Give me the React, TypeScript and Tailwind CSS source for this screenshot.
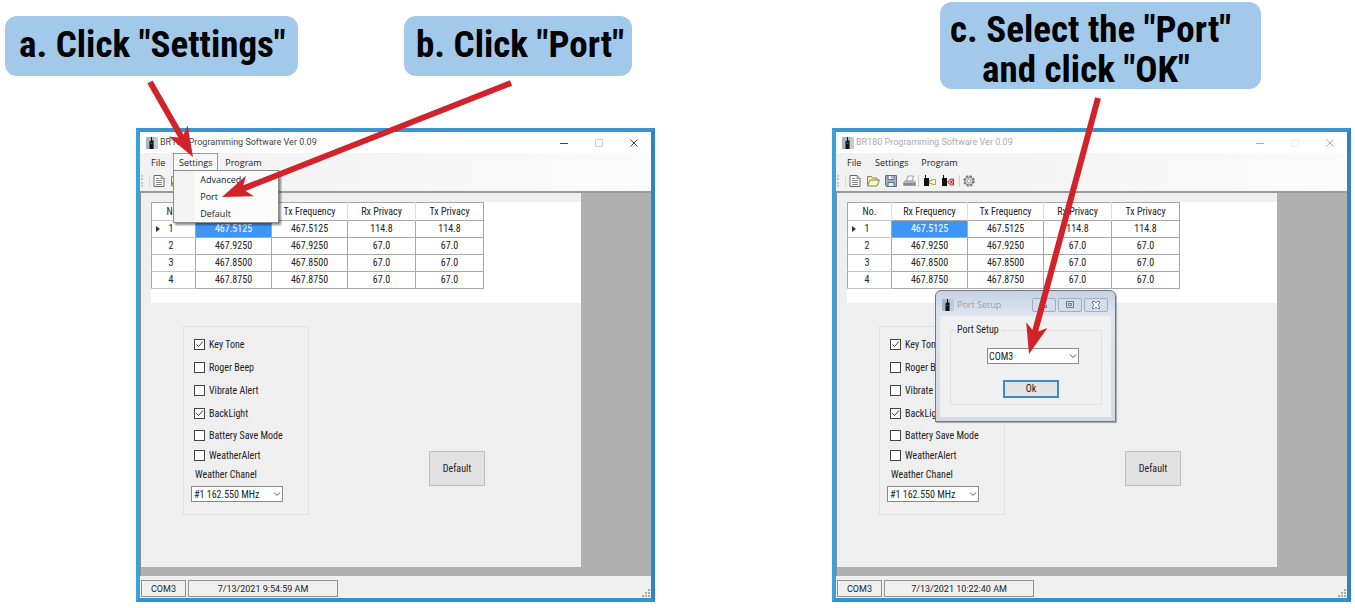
import React from 'react';
import { clsx } from 'clsx';

const GRID_FONT = "font-['Roboto_Condensed','Liberation_Sans_Narrow',Arial,sans-serif]";
const MENU_FONT = "font-['Open_Sans','Noto_Sans',sans-serif]";
const TITLE_FONT = 'font-[Roboto,sans-serif]';

const channels = [
  { no: 1, rx: '467.5125', tx: '467.5125', rxPrivacy: '114.8', txPrivacy: '114.8' },
  { no: 2, rx: '467.9250', tx: '467.9250', rxPrivacy: '67.0', txPrivacy: '67.0' },
  { no: 3, rx: '467.8500', tx: '467.8500', rxPrivacy: '67.0', txPrivacy: '67.0' },
  { no: 4, rx: '467.8750', tx: '467.8750', rxPrivacy: '67.0', txPrivacy: '67.0' },
];

const options = [
  { label: 'Key Tone', checked: true, row: 'h-[23px]' },
  { label: 'Roger Beep', checked: false, row: 'h-[23px]' },
  { label: 'Vibrate Alert', checked: false, row: 'h-[23px]' },
  { label: 'BackLight', checked: true, row: 'h-[23px]' },
  { label: 'Battery Save Mode', checked: false, row: 'h-5' },
  { label: 'WeatherAlert', checked: false, row: 'h-5' },
];

interface ArrowProps {
  from: [number, number];
  to: [number, number];
}

const Arrow: React.FC<ArrowProps> = ({ from, to }) => {
  const length = Math.hypot(to[0] - from[0], to[1] - from[1]);
  const ux = (to[0] - from[0]) / length;
  const uy = (to[1] - from[1]) / length;
  // point "back" px behind the tip and "side" px off the axis
  const at = (back: number, side: number) =>
    `${to[0] - ux * back - uy * side},${to[1] - uy * back + ux * side}`;

  return (
    <g fill="#d2232a">
      <polygon points={[at(length, -3), at(length, 3), at(18, 3), at(18, -3)].join(' ')} />
      <polygon points={[at(0, 0), at(30, 11), at(22, 0), at(30, -11)].join(' ')} />
    </g>
  );
};

const Arrows: React.FC<{ children: React.ReactNode }> = ({ children }) => (
  <svg className="absolute inset-0 z-30 h-full w-full overflow-visible pointer-events-none" aria-hidden="true">
    {children}
  </svg>
);

const StepLabel: React.FC<{ className?: string; children: React.ReactNode }> = ({ className, children }) => (
  <p
    className={clsx(
      "shrink-0 rounded-xl bg-[#a2c8ea] font-['Roboto_Condensed','Liberation_Sans_Narrow',sans-serif] text-[37px] font-bold leading-10 whitespace-nowrap text-black",
      className
    )}
  >
    {children}
  </p>
);

const RadioIcon: React.FC = () => (
  <svg className="h-3 w-3 shrink-0" viewBox="0 0 12 12" aria-hidden="true">
    <rect width="12" height="12" fill="#a9b3c4" />
    <rect x="8" width="4" height="12" fill="#c3cad6" />
    <path d="M5 0h1v3.500h1.500V12h-4V4.500L5 3.500z" fill="#0d1414" />
    <path d="M4.500 6h2v1h-2z" fill="#4c6a6a" />
  </svg>
);

const Chevron: React.FC = () => (
  <svg className="absolute right-0.5 h-2 w-2 pointer-events-none" viewBox="0 0 8 8" fill="none" stroke="#555" aria-hidden="true">
    <path d="M1 2.5 4 5.5 7 2.5" />
  </svg>
);

const DocIcon: React.FC = () => (
  <svg className="h-3 w-3" viewBox="0 0 12 12" fill="none" stroke="#666">
    <path d="M1 .5h7l3 3v8H1z" fill="#fff" />
    <path d="M8 .5v3h3M3 3.5h3M3 5.5h6M3 7.5h6M3 9.5h6" stroke="#888" />
  </svg>
);

const FolderIcon: React.FC = () => (
  <svg className="h-3 w-[13px]" viewBox="0 0 13 12" stroke="#8a8350">
    <path d="M.5 10.5v-9h4l1 1.5h4.500v2" fill="#f4efc4" />
    <path d="M.5 11 3 5h9.500L10 11z" fill="#fbf6c8" />
  </svg>
);

const SaveIcon: React.FC = () => (
  <svg className="h-3 w-3" viewBox="0 0 12 12" stroke="#5f7280">
    <path d="M.5.5h11v11h-10l-1-1z" fill="#9fb4c0" />
    <path d="M3 .5h6v4H3z" fill="#f4f7f9" />
    <path d="M3 7.500h6v4H3z" fill="#e6ecef" />
    <path d="M7 1v2.500" />
  </svg>
);

const PrinterIcon: React.FC = () => (
  <svg className="h-3 w-[13px]" viewBox="0 0 13 12" stroke="#9aa0a8">
    <path d="M5 1h5.500L9 6H3.500z" fill="#fff" />
    <path d="M2 6h9.500l1 2v2.500H.5V8z" fill="#b4bac4" />
    <path d="M1 9h11" stroke="#4f5662" />
  </svg>
);

const ReadIcon: React.FC = () => (
  <svg className="h-3 w-3" viewBox="0 0 12 12">
    <path d="M1 0h1v3h3v8H0V3h1z" fill="#111" />
    <path d="M5.500 5.500H8V4.500h3.500v5H8v-1H5.500z" fill="#fbf7b0" stroke="#96993c" strokeWidth=".8" />
  </svg>
);

const WriteIcon: React.FC = () => (
  <svg className="h-3 w-3" viewBox="0 0 12 12">
    <path d="M1 0h1v3h3v8H0V3h1z" fill="#111" />
    <path d="M11.500 4H8.500L5.500 7l3 3h3z" fill="#f6b3b3" stroke="#c02632" />
    <path d="M8 5.500l2.500 3M10.500 5.500 8 8.500" stroke="#c02632" />
  </svg>
);

const GearIcon: React.FC = () => (
  <svg className="h-3 w-3" viewBox="0 0 12 12" fill="none" stroke="#7b7b7b">
    <circle cx="6" cy="6" r="5" strokeWidth="1.500" strokeDasharray="2.400 1.530" />
    <circle cx="6" cy="6" r="4" fill="#e9e9e9" />
    <circle cx="6" cy="6" r="2" fill="#fff" stroke="#999" />
  </svg>
);

const Divider: React.FC = () => <span className="h-3 w-px bg-[#cfcfcf]" />;

const ToolButton: React.FC<{ label: string; children: React.ReactNode }> = ({ label, children }) => (
  <button type="button" aria-label={label} className="flex w-[18px] items-center justify-center">
    {children}
  </button>
);

const Toolbar: React.FC = () => (
  <div className="flex h-5 items-center pl-px">
    <span className="mr-1.5 h-3 border-l-2 border-dotted border-[#c4c4c4]" />
    <span className="h-3 w-px bg-[#dadada]" />
    <ToolButton label="New"><DocIcon /></ToolButton>
    <ToolButton label="Open"><FolderIcon /></ToolButton>
    <ToolButton label="Save"><SaveIcon /></ToolButton>
    <ToolButton label="Print"><PrinterIcon /></ToolButton>
    <Divider />
    <span className="w-0.5" />
    <ToolButton label="Read radio"><ReadIcon /></ToolButton>
    <ToolButton label="Write radio"><WriteIcon /></ToolButton>
    <span className="w-0.5" />
    <Divider />
    <ToolButton label="Options"><GearIcon /></ToolButton>
  </div>
);

const SettingsMenu: React.FC = () => (
  <ul className="absolute top-full -left-px z-10 w-[106px] border border-[#8c8c8c] bg-[linear-gradient(to_right,#f3f3f3_20px,#fbfbfb_20px)] shadow-[2px_2px_2px_rgba(0,0,0,0.45)]">
    {['Advanced', 'Port', 'Default'].map((item) => (
      <li key={item}>
        <button type="button" className="block h-[17px] w-full pl-[26px] text-left leading-4">
          {item}
        </button>
      </li>
    ))}
  </ul>
);

const ChannelTable: React.FC = () => (
  <table className={clsx(GRID_FONT, 'w-[333px] table-fixed border-collapse text-center text-[10px] leading-3 text-[#222]')}>
    <colgroup>
      <col className="w-[44px]" />
      <col className="w-[76px]" />
      <col className="w-[76px]" />
      <col className="w-[68px]" />
      <col className="w-[68px]" />
    </colgroup>
    <thead>
      <tr className="h-[18px] border border-[#a8a8a8]">
        {['No.', 'Rx Frequency', 'Tx Frequency', 'Rx Privacy', 'Tx Privacy'].map((title) => (
          <th key={title} scope="col" className="border-r border-[#dedede] p-0 font-normal last:border-[#a8a8a8]">
            {title}
          </th>
        ))}
      </tr>
    </thead>
    <tbody>
      {channels.map((c, i) => (
        <tr key={c.no} className="h-[17px]">
          <th scope="row" className="border border-[#c4c4c4] border-l-[#a8a8a8] border-r-[#a8a8a8] p-0 font-normal">
            <span className="flex items-center pl-1">
              <span className={clsx('h-1.5 w-1 bg-[#333] [clip-path:polygon(0_0,100%_50%,0_100%)]', i > 0 && 'invisible')} />
              <span className="w-[22px] text-center">{c.no}</span>
            </span>
          </th>
          <td className={clsx('border border-[#a8a8a8] p-0', i === 0 && 'bg-[#3f95f5] text-white')}>{c.rx}</td>
          <td className="border border-[#a8a8a8] p-0">{c.tx}</td>
          <td className="border border-[#a8a8a8] p-0">{c.rxPrivacy}</td>
          <td className="border border-[#a8a8a8] p-0">{c.txPrivacy}</td>
        </tr>
      ))}
    </tbody>
  </table>
);

const OptionsPanel: React.FC<{ id: string }> = ({ id }) => (
  <fieldset className={clsx(GRID_FONT, 'h-[189px] w-[126px] shrink-0 border border-[#e0e0e0] pt-1.5 pl-[7px] text-[10px] text-[#222]')}>
    {options.map((o) => (
      <label key={o.label} className={clsx('flex items-center gap-1 pl-[3px]', o.row)}>
        <input type="checkbox" defaultChecked={o.checked} className="peer sr-only" />
        <svg
          className="h-[11px] w-[11px] border border-[#444] bg-white text-transparent peer-checked:text-[#333]"
          viewBox="0 0 9 9"
          fill="none"
          stroke="currentColor"
        >
          <path d="M1.500 4.500 3.500 6.500 8 1.500" />
        </svg>
        {o.label}
      </label>
    ))}
    <label htmlFor={`${id}-weather`} className="block h-[21px] pl-1 leading-5">
      Weather Chanel
    </label>
    <div className="relative flex w-[92px] items-center">
      <select id={`${id}-weather`} className="h-4 w-full appearance-none border border-[#8a8a8a] bg-white pl-0.5">
        <option>#1 162.550 MHz</option>
      </select>
      <Chevron />
    </div>
  </fieldset>
);

interface AppWindowProps {
  id: string;
  time: string;
  inactive?: boolean;
  menuOpen?: boolean;
  children?: React.ReactNode;
}

const AppWindow: React.FC<AppWindowProps> = ({ id, time, inactive, menuOpen, children }) => (
  <div className={clsx(MENU_FONT, 'relative border-4 border-t-[#3a94d0] border-r-[#2f84c4] border-b-[#2f93cf] border-l-[#3aa2da] bg-[#f0f0f0] text-[9px] text-[#222]')}>
    <header className="flex h-[21px] items-center bg-white pl-1.5">
      <RadioIcon />
      <h2 className={clsx(TITLE_FONT, 'flex-1 pl-0.5 whitespace-nowrap', inactive ? 'text-[#aaa]' : 'text-[#444]')}>
        BR180 Programming Software Ver 0.09
      </h2>
      <div className={clsx('flex', inactive ? 'text-[#aaa]' : 'text-[#444]')}>
        <button type="button" aria-label="Minimize" className="flex w-[35px] justify-center">
          <svg className="h-2 w-2" viewBox="0 0 8 8" stroke="currentColor"><path d="M0 4.500h8" /></svg>
        </button>
        <button type="button" aria-label="Maximize" className={clsx('flex w-[35px] justify-center', inactive ? 'text-[#eee]' : 'text-[#ccc]')}>
          <svg className="h-2 w-2" viewBox="0 0 8 8" fill="none" stroke="currentColor"><path d="M.5.5h7v7h-7z" /></svg>
        </button>
        <button type="button" aria-label="Close" className="flex w-[35px] justify-center">
          <svg className="h-2 w-2" viewBox="0 0 8 8" stroke="currentColor"><path d="M.5.5l7 7M7.500.5l-7 7" /></svg>
        </button>
      </div>
    </header>

    <div className="border-b-2 border-[#999] bg-[linear-gradient(to_right,#f1f1f1,#fbfbfb)]">
      <nav className="flex h-[18px] items-start pl-1">
        <button type="button" className="h-[19px] px-[7px]">File</button>
        <div className={clsx('relative ml-px border border-b-0', menuOpen ? 'border-[#999] bg-[#f8f8f8]' : 'border-transparent')}>
          <button type="button" className="h-4 w-[43px] pt-px">Settings</button>
          {menuOpen && <SettingsMenu />}
        </div>
        <button type="button" className="h-[19px] px-[7px]">Program</button>
      </nav>
      <Toolbar />
    </div>

    <main className="border-l border-[#8f8f8f] bg-[#b0b0b0] pr-[70px] pb-[9px]">
      <div className="h-[374px] bg-[#efefef] pt-[9px]">
        <div className="ml-2.5 h-[101px] bg-white">
          <ChannelTable />
        </div>
        <div className="mt-[23px] ml-[42px] flex items-start">
          <OptionsPanel id={id} />
          <button type="button" className={clsx(GRID_FONT, 'mt-[125px] ml-[120px] h-[35px] w-14 border border-[#bdbdbd] bg-[#e2e2e2] text-[10px]')}>
            Default
          </button>
        </div>
      </div>
    </main>

    <footer className={clsx(TITLE_FONT, 'flex h-[22px] items-end gap-0.5 pl-px leading-4')}>
      <span className="mb-px h-[17px] w-[45px] border border-[#909090] text-center">COM3</span>
      <span className="mb-px h-[17px] w-[150px] border border-[#909090] text-center">{time}</span>
      <svg className="ml-auto h-2.5 w-2.5" viewBox="0 0 10 10" fill="#aaa" aria-hidden="true">
        <path d="M7 1h2v2H7zM4 4h2v2H4zM7 4h2v2H7zM1 7h2v2H1zM4 7h2v2H4zM7 7h2v2H7z" />
      </svg>
    </footer>
    {children}
  </div>
);

const FrameButton: React.FC<{ label: string; children: React.ReactNode }> = ({ label, children }) => (
  <button type="button" aria-label={label} className="flex h-3.5 w-6 items-center justify-center rounded-xs border border-[#a3aebd] bg-[#d3dde9]">
    <svg className="h-2 w-2.5" viewBox="0 0 10 8" fill="none" stroke="#6d7680" aria-hidden="true">
      {children}
    </svg>
  </button>
);

const PortDialog: React.FC = () => (
  <div
    role="dialog"
    aria-label="Port Setup"
    className="absolute top-[158px] left-[99px] z-20 h-[132px] w-[181px] rounded-t-md border border-[#6f7780] bg-[linear-gradient(to_bottom,#c6d2e2,#dbe4ef_22px,#d3dbe5)] px-1 pb-1 shadow-[1px_1px_1px_rgba(0,0,0,0.3)]"
  >
    <div className="flex h-[25px] items-center gap-0.5 pt-0.5 pr-[3px] pl-0.5">
      <RadioIcon />
      <span className="flex-1 pl-px text-[#98a0aa]">Port Setup</span>
      <FrameButton label="Minimize"><path d="M2.500 4.500h5v2h-5z" /></FrameButton>
      <FrameButton label="Maximize"><path d="M1.500.5h7v6h-7zM3.500 2.500h3v2h-3z" /></FrameButton>
      <FrameButton label="Close"><path d="M1.500.5h2L5 2 6.500.5h2v1.500L7 4l1.500 2v1.500h-2L5 6 3.500 7.500h-2V6L3 4 1.500 2z" fill="#fff" /></FrameButton>
    </div>
    <div className={clsx(GRID_FONT, 'h-[101px] bg-[#f0f0f0] pt-1.5 pr-[9px] pl-2.5 text-[10px]')}>
      <fieldset className="h-[83px] border border-[#e0e0e0] px-1">
        <legend className="px-0.5 leading-4">Port Setup</legend>
        <div className="relative mt-2.5 ml-8 flex w-[92px] items-center">
          <select aria-label="Port" className="h-4 w-full appearance-none border border-[#8a8a8a] bg-white pl-px">
            <option>COM3</option>
          </select>
          <Chevron />
        </div>
        <button type="button" className="mt-4 ml-12 block h-[18px] w-14 border-2 border-[#3b8ad2] bg-[#e4e4e4] leading-3">
          Ok
        </button>
      </fieldset>
    </div>
  </div>
);

const App: React.FC = () => (
  <div className="grid min-w-[1300px] grid-cols-[695fr_660fr] bg-white">
    <section className="relative">
      <div className="flex h-32 items-start gap-[106px] pt-4 pl-[5px]">
        <StepLabel className="h-[60px] w-[293px] pt-[9px] pl-3.5">a. Click "Settings"</StepLabel>
        <StepLabel className="h-[60px] w-[228px] pt-[9px] pl-3">b. Click "Port"</StepLabel>
      </div>
      <div className="pr-10 pl-[136px]">
        <AppWindow id="left" time="7/13/2021 9:54:59 AM" menuOpen />
      </div>
      <Arrows>
        <Arrow from={[150, 82]} to={[193, 157]} />
        <Arrow from={[511, 83]} to={[222, 197]} />
      </Arrows>
    </section>

    <section className="relative">
      <div className="flex h-32 items-start pt-0.5 pl-[245px]">
        <StepLabel className="h-[87px] w-[321px] pt-2 pl-2.5">
          <span className="block">c. Select the "Port"</span>
          <span className="block pl-8">and click "OK"</span>
        </StepLabel>
      </div>
      <div className="pr-1 pl-[137px]">
        <AppWindow id="right" time="7/13/2021 10:22:40 AM" inactive>
          <PortDialog />
        </AppWindow>
      </div>
      <Arrows>
        <Arrow from={[403, 98]} to={[334, 354]} />
      </Arrows>
    </section>
  </div>
);

export default App;
